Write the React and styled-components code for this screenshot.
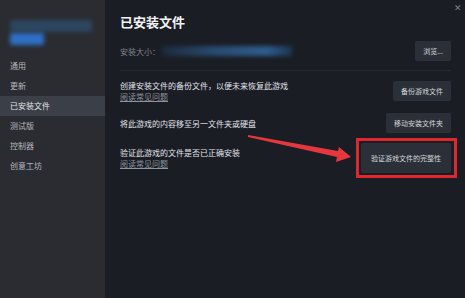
import styled, { createGlobalStyle } from "styled-components";

const GlobalStyle = createGlobalStyle`
  html, body {
    margin: 0;
    padding: 0;
    background: #1a1d24;
  }
  body {
    font-family: "Noto Sans CJK SC", "Noto Sans", sans-serif;
  }
`;

const Window = styled.div`
  position: relative;
  width: 465px;
  height: 298px;
  display: flex;
  overflow: hidden;
  background: #1a1d24;
`;

const Sidebar = styled.div`
  width: 105px;
  background: #2a2c31;
  display: flex;
  flex-direction: column;
  padding-top: 20px;
  box-sizing: border-box;
`;

const GameBlob = styled.div`
  margin: 0 0 10px 10px;
  height: 26px;
  display: flex;
  flex-direction: column;
  gap: 1px;
`;

const BlobBar = styled.div`
  width: ${(p) => p.w}px;
  height: ${(p) => p.h}px;
  background: ${(p) => p.color};
  filter: blur(2px);
  border-radius: 2px;
`;

const NavItem = styled.div`
  height: 20px;
  line-height: 20px;
  padding-left: 10px;
  font-size: 8px;
  color: ${(p) => (p.active ? "#e4e6ea" : "#b4b8be")};
  background: ${(p) => (p.active ? "#3b3f47" : "transparent")};
`;

const Main = styled.div`
  flex: 1;
  padding: 12px 14px 0 15px;
  display: flex;
  flex-direction: column;
`;

const Title = styled.div`
  height: 20px;
  line-height: 20px;
  font-size: 13px;
  font-weight: 700;
  color: #f2f3f5;
`;

const Row = styled.div`
  display: flex;
  align-items: center;
  justify-content: space-between;
  height: ${(p) => p.h || 20}px;
  margin-top: ${(p) => p.mt}px;
  padding-bottom: ${(p) => p.pb || 0}px;
  border-bottom: ${(p) => (p.divider ? "1px solid #262a32" : "none")};
`;

const SizeInfo = styled.div`
  display: flex;
  align-items: center;
  gap: 2px;
`;

const Muted = styled.span`
  font-size: 8px;
  color: #80868e;
`;

const BlurredValue = styled.div`
  width: 130px;
  height: 10px;
  background: linear-gradient(90deg, #1c2a3c 0%, #2a4a70 40%, #2f5d8e 80%, #1e3550 100%);
  filter: blur(2px);
`;

const TextBlock = styled.div`
  display: flex;
  flex-direction: column;
`;

const Desc = styled.div`
  font-size: 8px;
  line-height: 11px;
  color: #e2e4e7;
`;

const Link = styled.a`
  font-size: 8px;
  line-height: 11px;
  color: #8f959c;
  text-decoration: underline;
`;

const Button = styled.button`
  position: relative;
  height: ${(p) => p.h || 20}px;
  padding: 0 ${(p) => p.px || 8}px;
  border: none;
  border-radius: 2px;
  background: #2b2f37;
  color: #d3d6da;
  font-family: inherit;
  font-size: 7px;
  cursor: pointer;
  ${(p) =>
    p.highlight &&
    `
    &::after {
      content: "";
      position: absolute;
      inset: -5px -6px -5px -5px;
      border: 3px solid #e2262d;
      pointer-events: none;
    }
  `}
`;

const Close = styled.div`
  position: absolute;
  top: 1px;
  right: 3px;
  font-size: 9px;
  color: #7c8188;
`;

const Arrow = styled.svg`
  position: absolute;
  left: 0;
  top: 0;
  pointer-events: none;
`;

const navItems = ["通用", "更新", "已安装文件", "测试版", "控制器", "创意工坊"];

export default function App() {
  return (
    <>
      <GlobalStyle />
      <Window>
        <Sidebar>
          <GameBlob>
            <BlobBar w={82} h={12} color="#2d4660" />
            <BlobBar w={34} h={12} color="#2f6fc4" />
          </GameBlob>
          {navItems.map((item) => (
            <NavItem key={item} active={item === "已安装文件"}>
              {item}
            </NavItem>
          ))}
        </Sidebar>
        <Main>
          <Title>已安装文件</Title>
          <Row mt={9} pb={9} divider>
            <SizeInfo>
              <Muted>安装大小：</Muted>
              <BlurredValue />
            </SizeInfo>
            <Button px={8}>浏览...</Button>
          </Row>
          <Row mt={8} h={24}>
            <TextBlock>
              <Desc>创建安装文件的备份文件，以便未来恢复此游戏</Desc>
              <Link>阅读常见问题</Link>
            </TextBlock>
            <Button>备份游戏文件</Button>
          </Row>
          <Row mt={10}>
            <Desc>将此游戏的内容移至另一文件夹或硬盘</Desc>
            <Button>移动安装文件夹</Button>
          </Row>
          <Row mt={10} h={30}>
            <TextBlock>
              <Desc>验证此游戏的文件是否已正确安装</Desc>
              <Link>阅读常见问题</Link>
            </TextBlock>
            <Button h={30} px={10} highlight>
              验证游戏文件的完整性
            </Button>
          </Row>
        </Main>
        <Close>✕</Close>
        <Arrow width="465" height="298" viewBox="0 0 465 298">
          <polygon
            points="248,135 338,151 339,147 351,157 336,162 337,157 248,137"
            fill="#e5383e"
          />
        </Arrow>
      </Window>
    </>
  );
}
